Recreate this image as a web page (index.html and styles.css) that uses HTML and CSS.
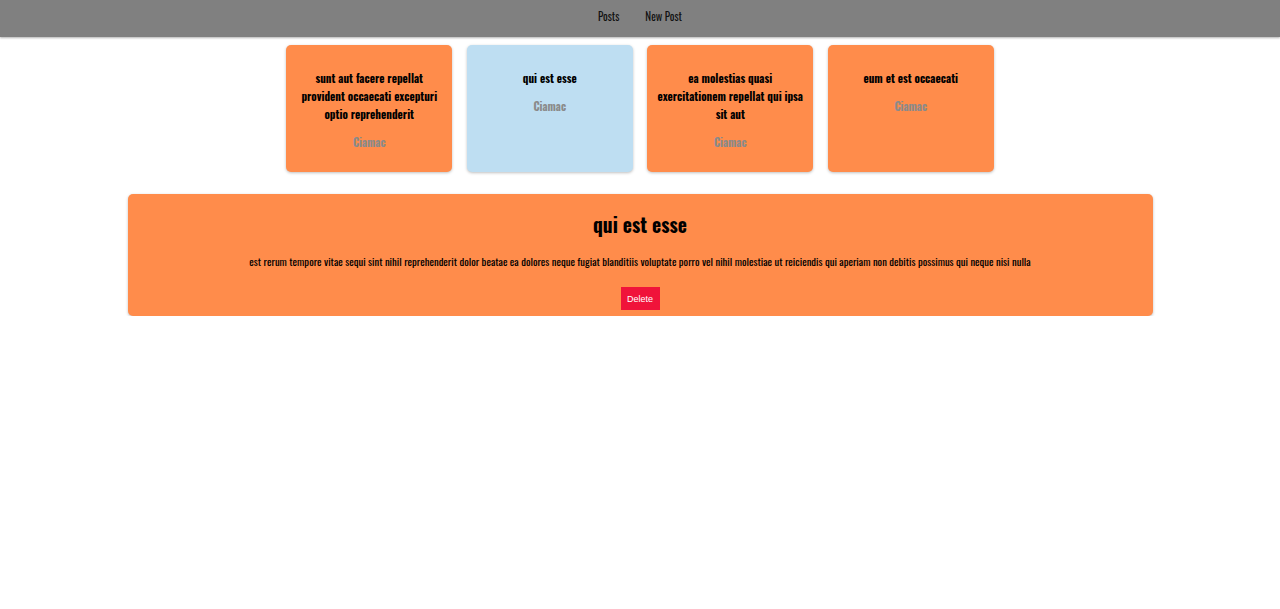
FILE: index.html
```html
<!DOCTYPE html>
<html lang="en">
<head>
<meta charset="utf-8">
<title>Posts</title>
<link rel="stylesheet" href="styles.css">
</head>
<body>
<nav class="navbar">
  <a class="nav-link" href="#">Posts</a>
  <a class="nav-link" href="#">New Post</a>
</nav>
<main class="content">
  <section class="post-list">
    <article class="post-card">
      <h3 class="post-title">sunt aut facere repellat provident occaecati excepturi optio reprehenderit</h3>
      <p class="post-author">Ciamac</p>
    </article>
    <article class="post-card selected">
      <h3 class="post-title">qui est esse</h3>
      <p class="post-author">Ciamac</p>
    </article>
    <article class="post-card">
      <h3 class="post-title">ea molestias quasi exercitationem repellat qui ipsa sit aut</h3>
      <p class="post-author">Ciamac</p>
    </article>
    <article class="post-card">
      <h3 class="post-title">eum et est occaecati</h3>
      <p class="post-author">Ciamac</p>
    </article>
  </section>
  <section class="post-detail">
    <h1 class="detail-title">qui est esse</h1>
    <p class="detail-body">est rerum tempore vitae sequi sint nihil reprehenderit dolor beatae ea dolores neque fugiat blanditiis voluptate porro vel nihil molestiae ut reiciendis qui aperiam non debitis possimus qui neque nisi nulla</p>
    <button class="delete-btn">Delete</button>
  </section>
</main>
</body>
</html>
```

FILE: styles.css
```css
* { box-sizing: border-box; }
html, body {
  margin: 0;
  padding: 0;
  background: #ffffff;
}
body {
  font-family: "Oswald", "DejaVu Sans Condensed", "Liberation Sans Narrow", sans-serif;
  color: #000;
}
.navbar {
  height: 37px;
  background: #808080;
  display: flex;
  justify-content: center;
  align-items: center;
  gap: 26px;
  padding-bottom: 5px;
  box-shadow: 0 1px 2px rgba(0,0,0,0.3);
}
.nav-link {
  color: #111;
  text-decoration: none;
  font-size: 11px;
}
.content {
  display: flex;
  flex-direction: column;
  align-items: center;
  padding-top: 8px;
}
.post-list {
  display: flex;
  gap: 14.5px;
}
.post-card {
  width: 166px;
  height: 127px;
  background: #ff8c4b;
  border-radius: 5px;
  box-shadow: 0 1px 3px rgba(0,0,0,0.25);
  padding: 24px 10px 0;
  text-align: center;
}
.post-card.selected {
  background: #bedef2;
}
.post-title {
  margin: 0;
  font-size: 11.2px;
  line-height: 18px;
  font-weight: bold;
}
.post-author {
  margin: 11px 0 0;
  font-size: 11px;
  font-weight: bold;
  color: #8a8a8a;
}
.post-detail {
  width: 1025px;
  margin-top: 22px;
  background: #ff8c4b;
  border-radius: 5px;
  box-shadow: 0 1px 3px rgba(0,0,0,0.25);
  padding: 16px 0 6px;
  text-align: center;
}
.detail-title {
  margin: 0;
  font-size: 19.5px;
  line-height: 30px;
  font-weight: bold;
}
.detail-body {
  margin: 12px 0 17px;
  font-size: 10.7px;
  line-height: 18px;
}
.delete-btn {
  background: #f0133a;
  color: #fff;
  border: none;
  font-family: "Liberation Sans", Arial, sans-serif;
  font-size: 9px;
  width: 39px;
  height: 23px;
  padding: 0;
  display: block;
  margin: 0 auto;
}
```
